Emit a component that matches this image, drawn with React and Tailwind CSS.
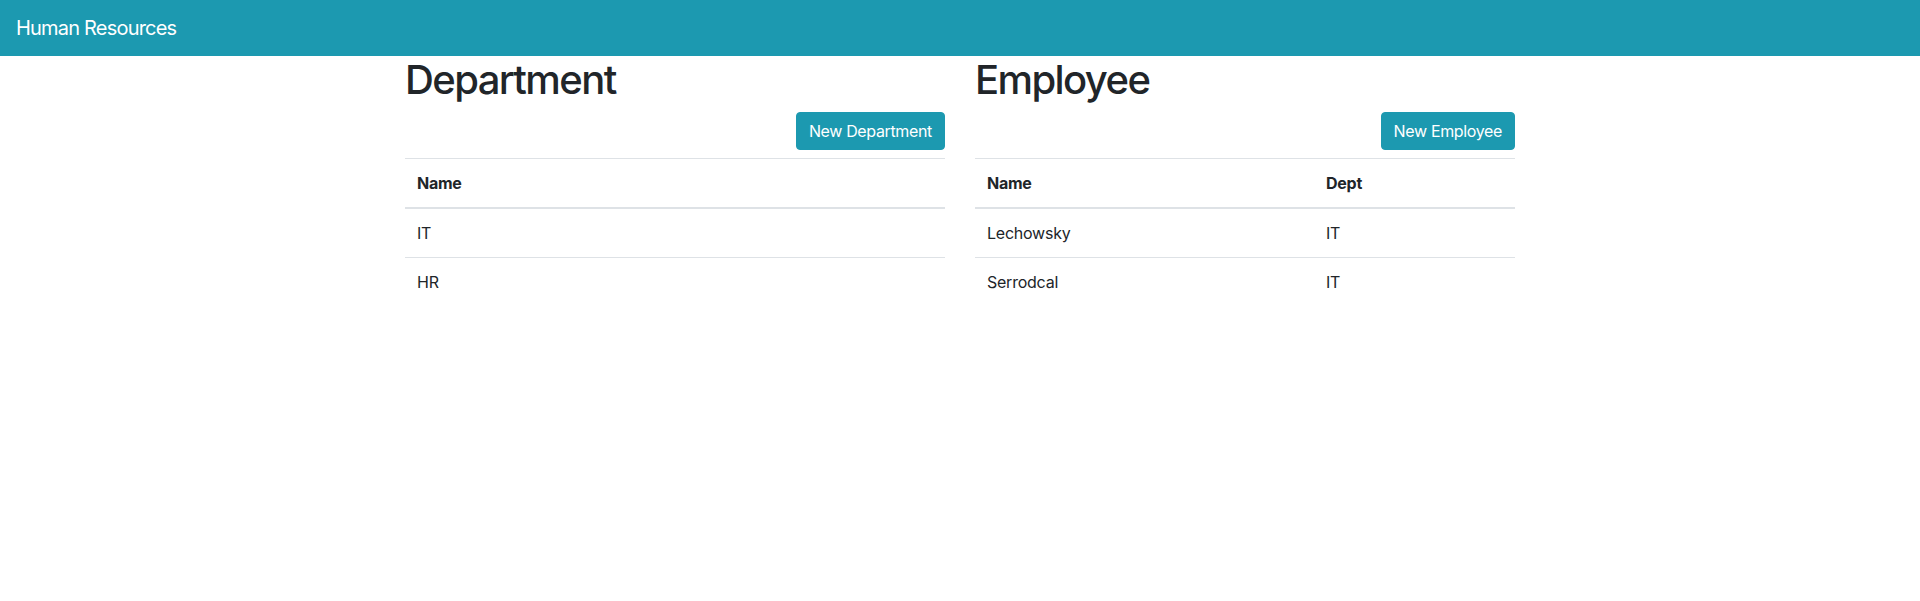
export default function App() {
  const font = { fontFamily: "Inter, Roboto, 'Liberation Sans', sans-serif" };
  return (
    <div className="min-h-[601px] bg-white text-[#212529] tracking-[-0.015em]" style={font}>
      <nav className="bg-[#1c99b0] h-[56px] px-4 flex items-center">
        <span className="text-white text-[20px] leading-[30px] tracking-[-0.04em]">Human Resources</span>
      </nav>
      <div className="w-[1140px] mx-auto px-[15px] flex gap-[30px]">
        <div className="w-[540px]">
          <h1 className="text-[40px] leading-[48px] font-medium mb-2 tracking-[-0.04em]">Department</h1>
          <div className="flex justify-end my-2">
            <button className="bg-[#1c99b0] text-white text-[16px] leading-6 px-3 py-1.5 border border-[#1c99b0] rounded tracking-[-0.022em]">New Department</button>
          </div>
          <table className="w-full border-collapse text-[16px] leading-6">
            <thead>
              <tr>
                <th className="text-left font-bold p-3 border-t border-[#dee2e6] border-b-2">Name</th>
              </tr>
            </thead>
            <tbody>
              {["IT", "HR"].map((d) => (
                <tr key={d}>
                  <td className="p-3 border-t border-[#dee2e6]">{d}</td>
                </tr>
              ))}
            </tbody>
          </table>
        </div>
        <div className="w-[540px]">
          <h1 className="text-[40px] leading-[48px] font-medium mb-2 tracking-[-0.04em]">Employee</h1>
          <div className="flex justify-end my-2">
            <button className="bg-[#1c99b0] text-white text-[16px] leading-6 px-3 py-1.5 border border-[#1c99b0] rounded tracking-[-0.022em]">New Employee</button>
          </div>
          <table className="w-full border-collapse text-[16px] leading-6">
            <thead>
              <tr>
                <th className="w-[339px] text-left font-bold p-3 border-t border-[#dee2e6] border-b-2">Name</th>
                <th className="text-left font-bold p-3 border-t border-[#dee2e6] border-b-2">Dept</th>
              </tr>
            </thead>
            <tbody>
              {[["Lechowsky", "IT"], ["Serrodcal", "IT"]].map(([n, d]) => (
                <tr key={n}>
                  <td className="p-3 border-t border-[#dee2e6]">{n}</td>
                  <td className="p-3 border-t border-[#dee2e6]">{d}</td>
                </tr>
              ))}
            </tbody>
          </table>
        </div>
      </div>
    </div>
  );
}
